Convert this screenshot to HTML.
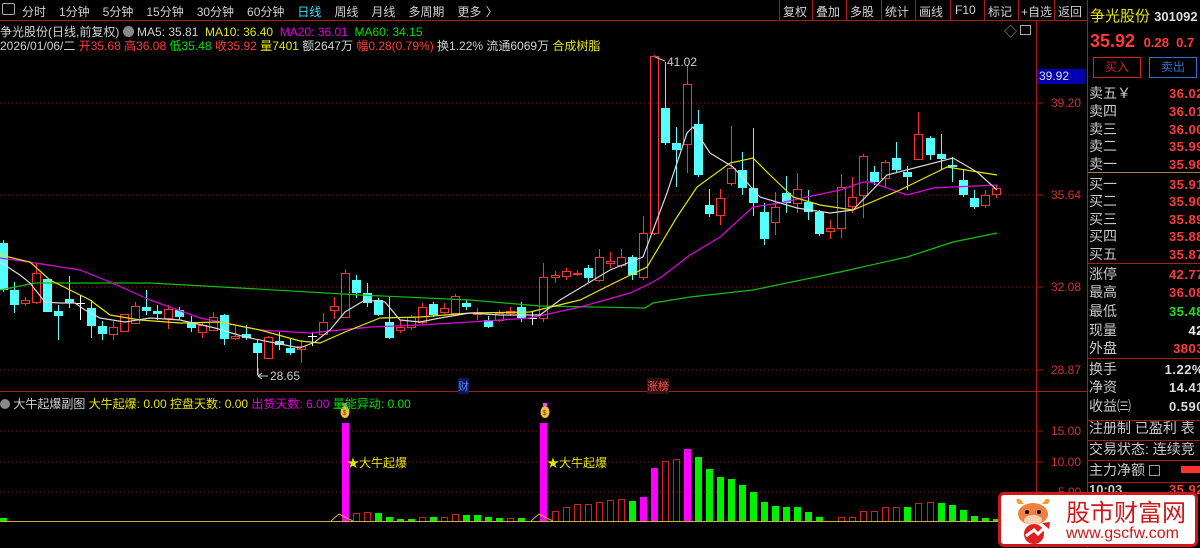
<!DOCTYPE html>
<html><head><meta charset="utf-8">
<style>
*{margin:0;padding:0;box-sizing:border-box}
body{width:1200px;height:548px;background:#000;overflow:hidden;position:relative;font-family:"Liberation Sans","Noto Sans CJK SC",sans-serif;font-size:12px;color:#c8c8c8}
.a{position:absolute;white-space:nowrap}
svg{position:absolute;left:0;top:0}
.rp{position:absolute;left:1089px;font-size:14px;line-height:18px}
.rv{position:absolute;right:-4px;font-size:13px;font-weight:bold;color:#ff3a3a;letter-spacing:.5px}
</style></head><body>
<svg id="s" width="1200" height="548"></svg>

<div class="a" style="left:2px;top:3px;width:13px;height:12px;border:1px solid #aaa;border-radius:2px"></div>
<div class="a" style="left:22px;top:3px;font-size:12px;color:#d0d0d0;word-spacing:1px">分时&nbsp;&nbsp; 1分钟&nbsp;&nbsp; 5分钟&nbsp;&nbsp; 15分钟&nbsp;&nbsp; 30分钟&nbsp;&nbsp; 60分钟&nbsp;&nbsp; <span style="color:#40e0ff">日线</span>&nbsp;&nbsp; 周线&nbsp;&nbsp; 月线&nbsp;&nbsp; 多周期&nbsp;&nbsp; 更多 〉</div>
<div class="a" style="left:783px;top:3px;color:#d0d0d0">复权</div>
<div class="a" style="left:816px;top:3px;color:#d0d0d0">叠加</div>
<div class="a" style="left:850px;top:3px;color:#d0d0d0">多股</div>
<div class="a" style="left:885px;top:3px;color:#d0d0d0">统计</div>
<div class="a" style="left:919px;top:3px;color:#d0d0d0">画线</div>
<div class="a" style="left:955px;top:3px;color:#d0d0d0">F10</div>
<div class="a" style="left:988px;top:3px;color:#d0d0d0">标记</div>
<div class="a" style="left:1021px;top:3px;color:#d0d0d0">+自选</div>
<div class="a" style="left:1058px;top:3px;color:#d0d0d0">返回</div>

<div class="a" style="left:0;top:23px;color:#d0d0d0">争光股份(日线,前复权) <span style="display:inline-block;width:11px;height:11px;border-radius:50%;background:#888;vertical-align:-1px"></span> MA5: 35.81&nbsp; <span style="color:#e6e600">MA10: 36.40</span>&nbsp; <span style="color:#e000e0">MA20: 36.01</span>&nbsp; <span style="color:#00e000">MA60: 34.15</span></div>
<div class="a" style="left:0;top:37px;color:#d0d0d0">2026/01/06/二 <span style="color:#ff3a3a">开35.68</span> <span style="color:#ff3a3a">高36.08</span> <span style="color:#00e000">低35.48</span> <span style="color:#ff3a3a">收35.92</span> <span style="color:#e6e600">量7401</span> 额2647万 <span style="color:#ff3a3a">幅0.28(0.79%)</span> 换1.22% 流通6069万 <span style="color:#e6e600">合成树脂</span></div>
<div class="a" style="left:1004px;top:21px;color:#aaa;font-size:13px">◇</div>
<div class="a" style="left:1020px;top:25px;width:11px;height:10px;border:1px solid #aaa"></div>

<div class="a" style="left:1037px;top:69px;width:48px;height:15px;background:#0000b0;color:#ddd;font-size:12px;padding-left:2px">39.92</div>
<div class="a" style="left:1051px;top:96px;color:#d03030">39.20</div>
<div class="a" style="left:1051px;top:188px;color:#d03030">35.64</div>
<div class="a" style="left:1051px;top:280px;color:#d03030">32.08</div>
<div class="a" style="left:1051px;top:363px;color:#d03030">28.87</div>
<div class="a" style="left:1051px;top:424px;color:#d03030">15.00</div>
<div class="a" style="left:1051px;top:455px;color:#d03030">10.00</div>
<div class="a" style="left:1058px;top:485px;color:#d03030">5.00</div>

<div class="a" style="left:667px;top:55px;color:#ccc">41.02</div>
<div class="a" style="left:270px;top:369px;color:#ccc">28.65</div>
<div class="a" style="left:458px;top:378px;color:#5080ff;background:#101850;font-size:11px">财</div>
<div class="a" style="left:647px;top:378px;color:#ff5050;background:#301010;font-size:11px">涨榜</div>

<div class="a" style="left:0;top:395px;color:#d0d0d0"><span style="display:inline-block;width:10px;height:10px;border-radius:50%;background:#888;vertical-align:-1px"></span> 大牛起爆副图 <span style="color:#e6e600">大牛起爆: 0.00</span> <span style="color:#e6e600">控盘天数: 0.00</span> <span style="color:#e000e0">出货天数: 6.00</span> <span style="color:#00e000">量能异动: 0.00</span></div>
<div class="a" style="left:347px;top:454px;color:#e6e600">★大牛起爆</div>
<div class="a" style="left:547px;top:454px;color:#e6e600">★大牛起爆</div>

<div class="a" style="left:1090px;top:5px;font-size:15px;color:#e6e600">争光股份 <span style="color:#ddd;font-size:13px;font-weight:bold">301092</span></div>
<div class="a" style="left:1090px;top:31px;font-size:18px;font-weight:bold;color:#ff3a3a">35.92 <span style="font-size:13px">&nbsp;0.28&nbsp;&nbsp;0.7</span></div>
<div class="a" style="left:1093px;top:57px;width:48px;height:21px;border:1px solid #d02020;color:#d02020;text-align:center;line-height:19px">买入</div>
<div class="a" style="left:1149px;top:57px;width:48px;height:21px;border:1px solid #3070d0;color:#3070d0;text-align:center;line-height:19px">卖出</div>
<div style="position:absolute;left:1089px;top:84px;width:111px;height:400px">
<div class="rp" style="left:0;top:0">卖五￥</div><div class="rv" style="top:2px">36.02</div>
<div class="rp" style="left:0;top:18px">卖四</div><div class="rv" style="top:20px">36.01</div>
<div class="rp" style="left:0;top:36px">卖三</div><div class="rv" style="top:38px">36.00</div>
<div class="rp" style="left:0;top:53px">卖二</div><div class="rv" style="top:55px">35.99</div>
<div class="rp" style="left:0;top:71px">卖一</div><div class="rv" style="top:73px">35.98</div>
<div class="rp" style="left:0;top:91px">买一</div><div class="rv" style="top:93px">35.91</div>
<div class="rp" style="left:0;top:108px">买二</div><div class="rv" style="top:110px">35.90</div>
<div class="rp" style="left:0;top:126px">买三</div><div class="rv" style="top:128px">35.89</div>
<div class="rp" style="left:0;top:143px">买四</div><div class="rv" style="top:145px">35.88</div>
<div class="rp" style="left:0;top:161px">买五</div><div class="rv" style="top:163px">35.87</div>
<div class="rp" style="left:0;top:181px">涨停</div><div class="rv" style="top:183px">42.77</div>
<div class="rp" style="left:0;top:199px">最高</div><div class="rv" style="top:201px">36.08</div>
<div class="rp" style="left:0;top:218px">最低</div><div class="rv" style="top:220px;color:#20e020">35.48</div>
<div class="rp" style="left:0;top:237px">现量</div><div class="rv" style="top:239px;color:#eee">42</div>
<div class="rp" style="left:0;top:255px">外盘</div><div class="rv" style="top:257px">3803</div>
<div class="rp" style="left:0;top:276px">换手</div><div class="rv" style="top:278px;color:#ddd">1.22%</div>
<div class="rp" style="left:0;top:294px">净资</div><div class="rv" style="top:296px;color:#ddd">14.41</div>
<div class="rp" style="left:0;top:313px">收益㈢</div><div class="rv" style="top:315px;color:#ddd">0.590</div>
<div class="rp" style="left:0;top:335px">注册制 已盈利 表</div>
<div class="rp" style="left:0;top:356px">交易状态: 连续竞</div>
<div class="rp" style="left:0;top:377px">主力净额 <span style="display:inline-block;width:11px;height:11px;border:1px solid #999;vertical-align:-1px"></span></div>
<div class="a" style="left:92px;top:382px;width:19px;height:7px;background:#ff3030"></div>
<div class="rp" style="left:0;top:397px;font-weight:bold;font-size:13px">10:03</div><div class="rv" style="top:398px">35.92</div>
</div>

<div class="a" style="left:998px;top:492px;width:200px;height:55px;background:#fff;border:3px solid #d01818;border-radius:6px"></div>
<svg width="1200" height="548" style="pointer-events:none">
<g transform="translate(1012,496)">
<path d="M6 8 Q2 2 8 3 L12 8Z" fill="#f0a030"/><path d="M36 8 Q40 2 34 3 L30 8Z" fill="#f0a030"/>
<ellipse cx="21" cy="18" rx="15" ry="11" fill="#f08040"/>
<ellipse cx="21" cy="24" rx="9" ry="5" fill="#fcd0b0"/>
<circle cx="15" cy="16" r="2" fill="#000"/><circle cx="27" cy="16" r="2" fill="#000"/>
<circle cx="22" cy="38" r="10" fill="#e02020"/>
<path d="M14 40 L22 34 L26 38 L36 28" stroke="#fff" stroke-width="3" fill="none"/>
<path d="M30 27 L38 26 L37 33Z" fill="#e02020"/>
</g></svg>
<div class="a" style="left:1066px;top:497px;font-size:24px;color:#d01818;font-family:'Noto Sans CJK SC',sans-serif;line-height:28px;letter-spacing:0px">股市财富网</div>
<div class="a" style="left:1066px;top:526px;font-size:16px;color:#d01818;line-height:16px">www.gscfw.com</div>

<script>
var S=document.getElementById('s'),h='';
function L(x1,y1,x2,y2,c,w,d){h+='<line x1="'+x1+'" y1="'+y1+'" x2="'+x2+'" y2="'+y2+'" stroke="'+c+'" stroke-width="'+(w||1)+'"'+(d?' stroke-dasharray="'+d+'"':'')+'/>';}
function R(x,y,w,hh,f,s){h+='<rect x="'+x+'" y="'+y+'" width="'+w+'" height="'+hh+'" fill="'+f+'"'+(s?' stroke="'+s+'"':'')+'/>';}
[103,195,287,370].forEach(function(y){L(0,y,1036,y,'#801818',1,'1,3');L(1036,y,1043,y,'#a02020');});
[431,462,492].forEach(function(y){L(0,y,1036,y,'#801818',1,'1,3');L(1036,y,1043,y,'#a02020');});
L(0,20.5,1088,20.5,'#b01818');L(1036.5,20,1036.5,548,'#b01818');L(0,391.5,1088,391.5,'#b01818');
L(1087.5,0,1087.5,548,'#b01818');
[779,812,846,881,915,950,984,1018,1054].forEach(function(x){L(x+.5,0,x+.5,20,'#b01818');});
L(1088,172.5,1200,172.5,'#a08040');L(1088,263.5,1200,263.5,'#b01818');L(1088,358.5,1200,358.5,'#b01818');
L(1088,420.5,1200,420.5,'#b01818');L(1088,440.5,1200,440.5,'#b01818');L(1088,460.5,1200,460.5,'#b01818');L(1088,482.5,1200,482.5,'#b01818');
var c=[['c',243,290,240,292],['c',290,305,282,313],['r',300,303,297,306],['r',273,302,263,304],['c',279,312,279,312],['c',311,316,305,340],['c',299,303,276,308],['w',303,304,295,320],['c',308,326,300,338],['c',326,334,321,340],['r',327,334,321,340],['r',314,331,314,331],['r',306,323,302,324],['c',307,311,290,315],['c',311,314,305,320],['r',309,318,305,329],['c',310,317,307,320],['c',322,328,316,332],['r',325,332,322,338],['r',317,330,312,331],['c',315,339,314,345],['r',336,338,326,340],['c',334,338,325,340],['c',343,353,340,375],['r',337,358,336,358],['c',341,345,332,350],['c',348,353,338,355],['r',346,349,340,363],['w',336,337,332,346],['r',322,334,313,335],['r',306,310,297,319],['r',273,317,269,318],['c',280,293,275,298],['c',293,303,283,307],['c',300,315,298,316],['c',322,338,297,339],['r',327,330,320,333],['r',317,327,315,330],['r',307,322,303,324],['c',304,315,302,317],['r',308,312,303,314],['r',296,313,294,314],['c',303,307,300,310],['r',312,314,308,320],['c',320,327,316,328],['r',313,320,310,322],['r',311,313,307,316],['c',307,318,302,322],['w',318,319,312,325],['r',277,318,263,322],['r',275,277,271,283],['r',271,276,268,280],['r',273,274,270,276],['c',268,278,265,282],['r',257,280,249,282],['r',261,263,252,268],['r',257,265,249,268],['c',257,275,255,280],['r',233,277,216,280],['r',56,233,55,235],['c',108,143,62,145],['c',143,150,127,187],['r',84,144,65,173],['c',124,175,110,177],['c',205,214,189,217],['r',198,215,189,225],['r',168,183,126,186],['c',170,188,152,195],['c',188,203,128,216],['c',212,239,203,245],['r',207,222,192,235],['c',193,203,176,213],['r',189,203,173,213],['c',202,212,190,220],['c',212,234,210,236],['r',228,231,220,239],['r',187,228,174,238],['r',197,206,177,213],['r',156,195,154,218],['c',172,182,166,185],['r',162,178,160,188],['c',158,170,142,172],['c',172,177,166,190],['r',134,159,112,160],['c',138,155,136,160],['c',154,159,134,170],['c',165,167,157,182],['c',180,195,170,197],['c',198,207,190,209],['r',195,205,190,208],['r',188,194,185,198]];
function X(i){return 3+i*11.03;}
c.forEach(function(d,i){var x=Math.round(X(i));var t=d[0];
 if(t=='c'){L(x+.5,d[3],x+.5,d[4],'#54ffff');R(x-4,d[1],9,Math.max(1,d[2]-d[1]),'#54ffff');}
 else if(t=='r'){L(x+.5,d[3],x+.5,d[1],'#ff3232');L(x+.5,d[2],x+.5,d[4],'#ff3232');h+='<rect x="'+(x-3.5)+'" y="'+(d[1]+.5)+'" width="8" height="'+Math.max(1,d[2]-d[1])+'" fill="none" stroke="#ff3232"/>';}
 else{L(x+.5,d[3],x+.5,d[4],'#fff');L(x-4,d[1]+.5,x+5,d[1]+.5,'#fff');}
});
function P(pts,col){h+='<polyline fill="none" stroke="'+col+'" stroke-width="1.2" points="'+pts+'"/>';}
P('0,290 35,283 150,283 240,288 360,295 470,300 540,306 645,308 653,303 690,297 753,290 840,272 907,257 953,242 997,233','#10c010');
P('0,258 35,263 80,270 110,282 150,300 200,318 260,330 310,333 340,330 370,327 420,325 470,322 530,318 580,307 630,293 645,286 660,278 690,255 720,237 753,207 780,203 807,197 840,190 863,182 870,182 907,195 933,188 953,187 997,185','#e000e0');
P('0,255 30,262 50,280 70,290 90,300 110,315 140,320 180,323 220,322 260,330 300,341 320,343 345,332 380,318 420,317 470,313 530,312 580,300 610,285 647,267 677,217 697,187 730,163 753,158 770,175 793,197 820,205 853,210 900,190 947,167 997,175','#e6e600');
P('0,262 20,275 30,283 45,302 60,303 75,303 85,310 100,318 125,322 150,318 180,320 215,328 245,337 275,343 300,348 315,342 330,330 345,312 365,300 385,302 400,320 420,322 440,318 470,313 500,315 540,315 560,300 610,270 643,257 667,193 687,133 693,127 710,153 733,167 760,197 797,208 830,213 853,210 887,175 953,158 977,172 997,190','#d8d8d8');
L(655,57,665,61,'#ccc');L(258,376,268,376,'#ccc');L(258,376,262,373,'#ccc');L(258,376,262,379,'#ccc');L(258,376,258,368,'#ccc');
var v={0:['g',518],31:['m',423],49:['m',423],32:['r',513],33:['r',512],34:['g',513],35:['g',517],36:['g',519],37:['g',519],38:['r',517],39:['g',517],40:['r',517],41:['r',514],42:['g',515],43:['g',515],44:['g',517],45:['g',518],46:['r',518],47:['g',518],50:['r',511],51:['r',507],52:['r',504],53:['r',504],54:['r',502],55:['r',500],56:['r',499],57:['g',501],58:['m',497],59:['m',468],60:['r',461],61:['r',459],62:['m',449],63:['g',457],64:['g',469],65:['g',477],66:['g',479],67:['g',485],68:['g',492],69:['g',502],70:['g',506],71:['g',507],72:['g',507],73:['g',512],74:['g',517],76:['r',517],77:['r',517],78:['r',511],79:['r',511],80:['r',507],81:['r',507],82:['g',507],83:['r',503],84:['r',502],85:['g',503],86:['g',505],87:['g',510],88:['g',516],89:['g',518],90:['g',519]};
for(var k in v){var i=+k,x=Math.round(X(i)),t=v[k][0],y=v[k][1];
 if(t=='r')h+='<rect x="'+(x-2.5)+'" y="'+(y+.5)+'" width="6" height="'+(521-y)+'" fill="none" stroke="#d02020"/>';
 else R(x-3,y,7,521-y,t=='g'?'#00f000':'#ff00ff');}
L(0,521.5,1000,521.5,'#c8b040');
[[339,345],[539,545]].forEach(function(p){h+='<polyline fill="none" stroke="#c8b040" points="'+(p[0]-8)+',521 '+p[0]+',514 '+(p[0]+14)+',521"/>';});
[345,545].forEach(function(x){h+='<ellipse cx="'+x+'" cy="412" rx="4.5" ry="6" fill="#f0c040"/><rect x="'+(x-2)+'" y="403" width="4" height="3" fill="#ff40ff"/><text x="'+(x-2.5)+'" y="415" font-size="7" fill="#804000">$</text>';});
S.innerHTML=h;
</script>
</body></html>
